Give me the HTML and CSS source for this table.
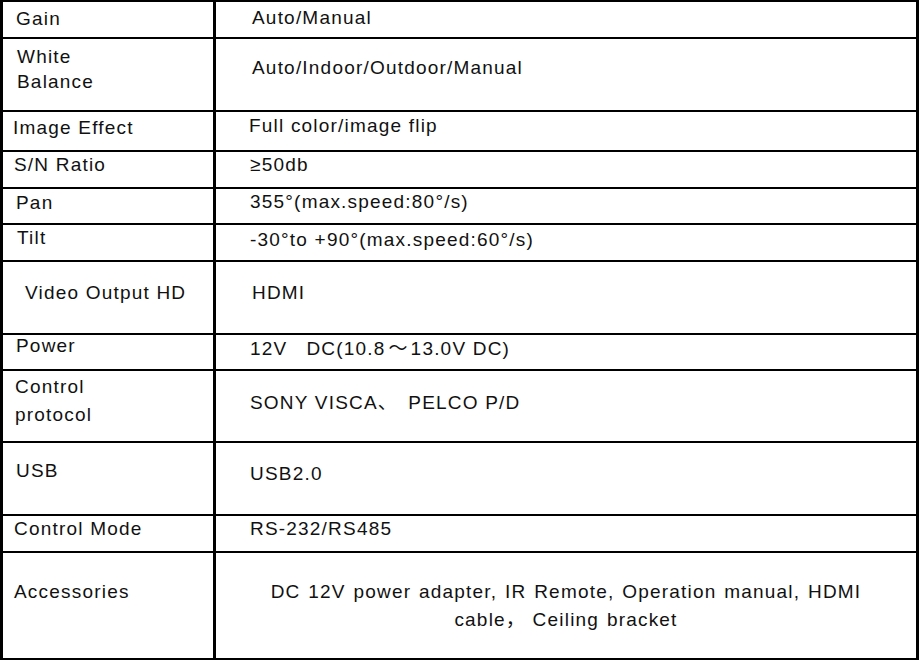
FILE: index.html
```html
<!DOCTYPE html>
<html lang="en">
<head>
<meta charset="utf-8">
<title>Specifications</title>
<link rel="stylesheet" href="styles.css">
</head>
<body>
<div class="spec">
  <div class="cell key k-gain">Gain</div>
  <div class="cell val v-gain">Auto/Manual</div>

  <div class="cell key k-wb">White<br>Balance</div>
  <div class="cell val v-wb">Auto/Indoor/Outdoor/Manual</div>

  <div class="cell key k-ie">Image Effect</div>
  <div class="cell val v-ie">Full color/image flip</div>

  <div class="cell key k-sn">S/N Ratio</div>
  <div class="cell val v-sn">≥50db</div>

  <div class="cell key k-pan">Pan</div>
  <div class="cell val v-pan">355°(max.speed:80°/s)</div>

  <div class="cell key k-tilt">Tilt</div>
  <div class="cell val v-tilt">-30°to +90°(max.speed:60°/s)</div>

  <div class="cell key k-video">Video Output HD</div>
  <div class="cell val v-video">HDMI</div>

  <div class="cell key k-power">Power</div>
  <div class="cell val v-power">12V<span class="cjk">　</span>DC(10.8<span class="cjk tilde">～</span>13.0V DC)</div>

  <div class="cell key k-proto">Control<br>protocol</div>
  <div class="cell val v-proto">SONY VISCA<span class="cjk comma">、</span> PELCO P/D</div>

  <div class="cell key k-usb">USB</div>
  <div class="cell val v-usb">USB2.0</div>

  <div class="cell key k-mode">Control Mode</div>
  <div class="cell val v-mode">RS-232/RS485</div>

  <div class="cell key k-acc">Accessories</div>
  <div class="cell val v-acc">DC 12V power adapter, IR Remote, Operation manual, HDMI<br>cable<span class="cjk">，</span> Ceiling bracket</div>
</div>
</body>
</html>
```

FILE: styles.css
```css
html, body {
  margin: 0;
  padding: 0;
  background: #ffffff;
}

body {
  font-family: "Liberation Sans", Arial, "Noto Sans CJK SC", sans-serif;
  font-size: 19px;
  line-height: 20px;
  letter-spacing: 1.2px;
  color: #111111;
}

.spec {
  display: grid;
  width: 919px;
  box-sizing: border-box;
  grid-template-columns: 210px 700px;
  grid-template-rows: 35px 71px 38px 35px 34px 35px 71px 34px 70px 71px 35px 105px;
  column-gap: 3px;
  row-gap: 2px;
  padding: 2px 3px;
  background: #000000;
}

.cell {
  background: #ffffff;
  white-space: nowrap;
}

.cjk {
  font-family: "Noto Sans CJK SC", sans-serif;
  letter-spacing: 0;
}

.tilde { padding: 0 3px; }
.comma { padding-right: 5px; }

/* key column */
.key { padding-left: 13px; }
.k-gain  { padding-top: 7px; }
.k-wb    { padding-top: 5px; padding-left: 14px; line-height: 25px; }
.k-ie    { padding-top: 6px; padding-left: 10px; }
.k-sn    { padding-top: 3px; padding-left: 11px; }
.k-pan   { padding-top: 4px; }
.k-tilt  { padding-top: 3px; padding-left: 14px; }
.k-video { padding-top: 21px; padding-left: 22px; }
.k-power { padding-top: 1px; }
.k-proto { padding-top: 2px; padding-left: 12px; line-height: 28px; }
.k-usb   { padding-top: 18px; }
.k-mode  { padding-top: 3px; padding-left: 11px; }
.k-acc   { padding-top: 29px; padding-left: 11px; }

/* value column */
.val { padding-left: 34px; }
.v-gain  { padding-top: 6px; padding-left: 36px; }
.v-wb    { padding-top: 19px; padding-left: 36px; }
.v-ie    { padding-top: 4px; padding-left: 33px; }
.v-sn    { padding-top: 3px; }
.v-pan   { padding-top: 3px; }
.v-tilt  { padding-top: 5px; }
.v-video { padding-top: 21px; padding-left: 36px; }
.v-power { padding-top: 2px; }
.v-proto { padding-top: 20px; }
.v-usb   { padding-top: 21px; }
.v-mode  { padding-top: 3px; }
.v-acc {
  padding-top: 26px;
  padding-left: 0;
  line-height: 26px;
  text-align: center;
  word-spacing: 1.3px;
}
```
